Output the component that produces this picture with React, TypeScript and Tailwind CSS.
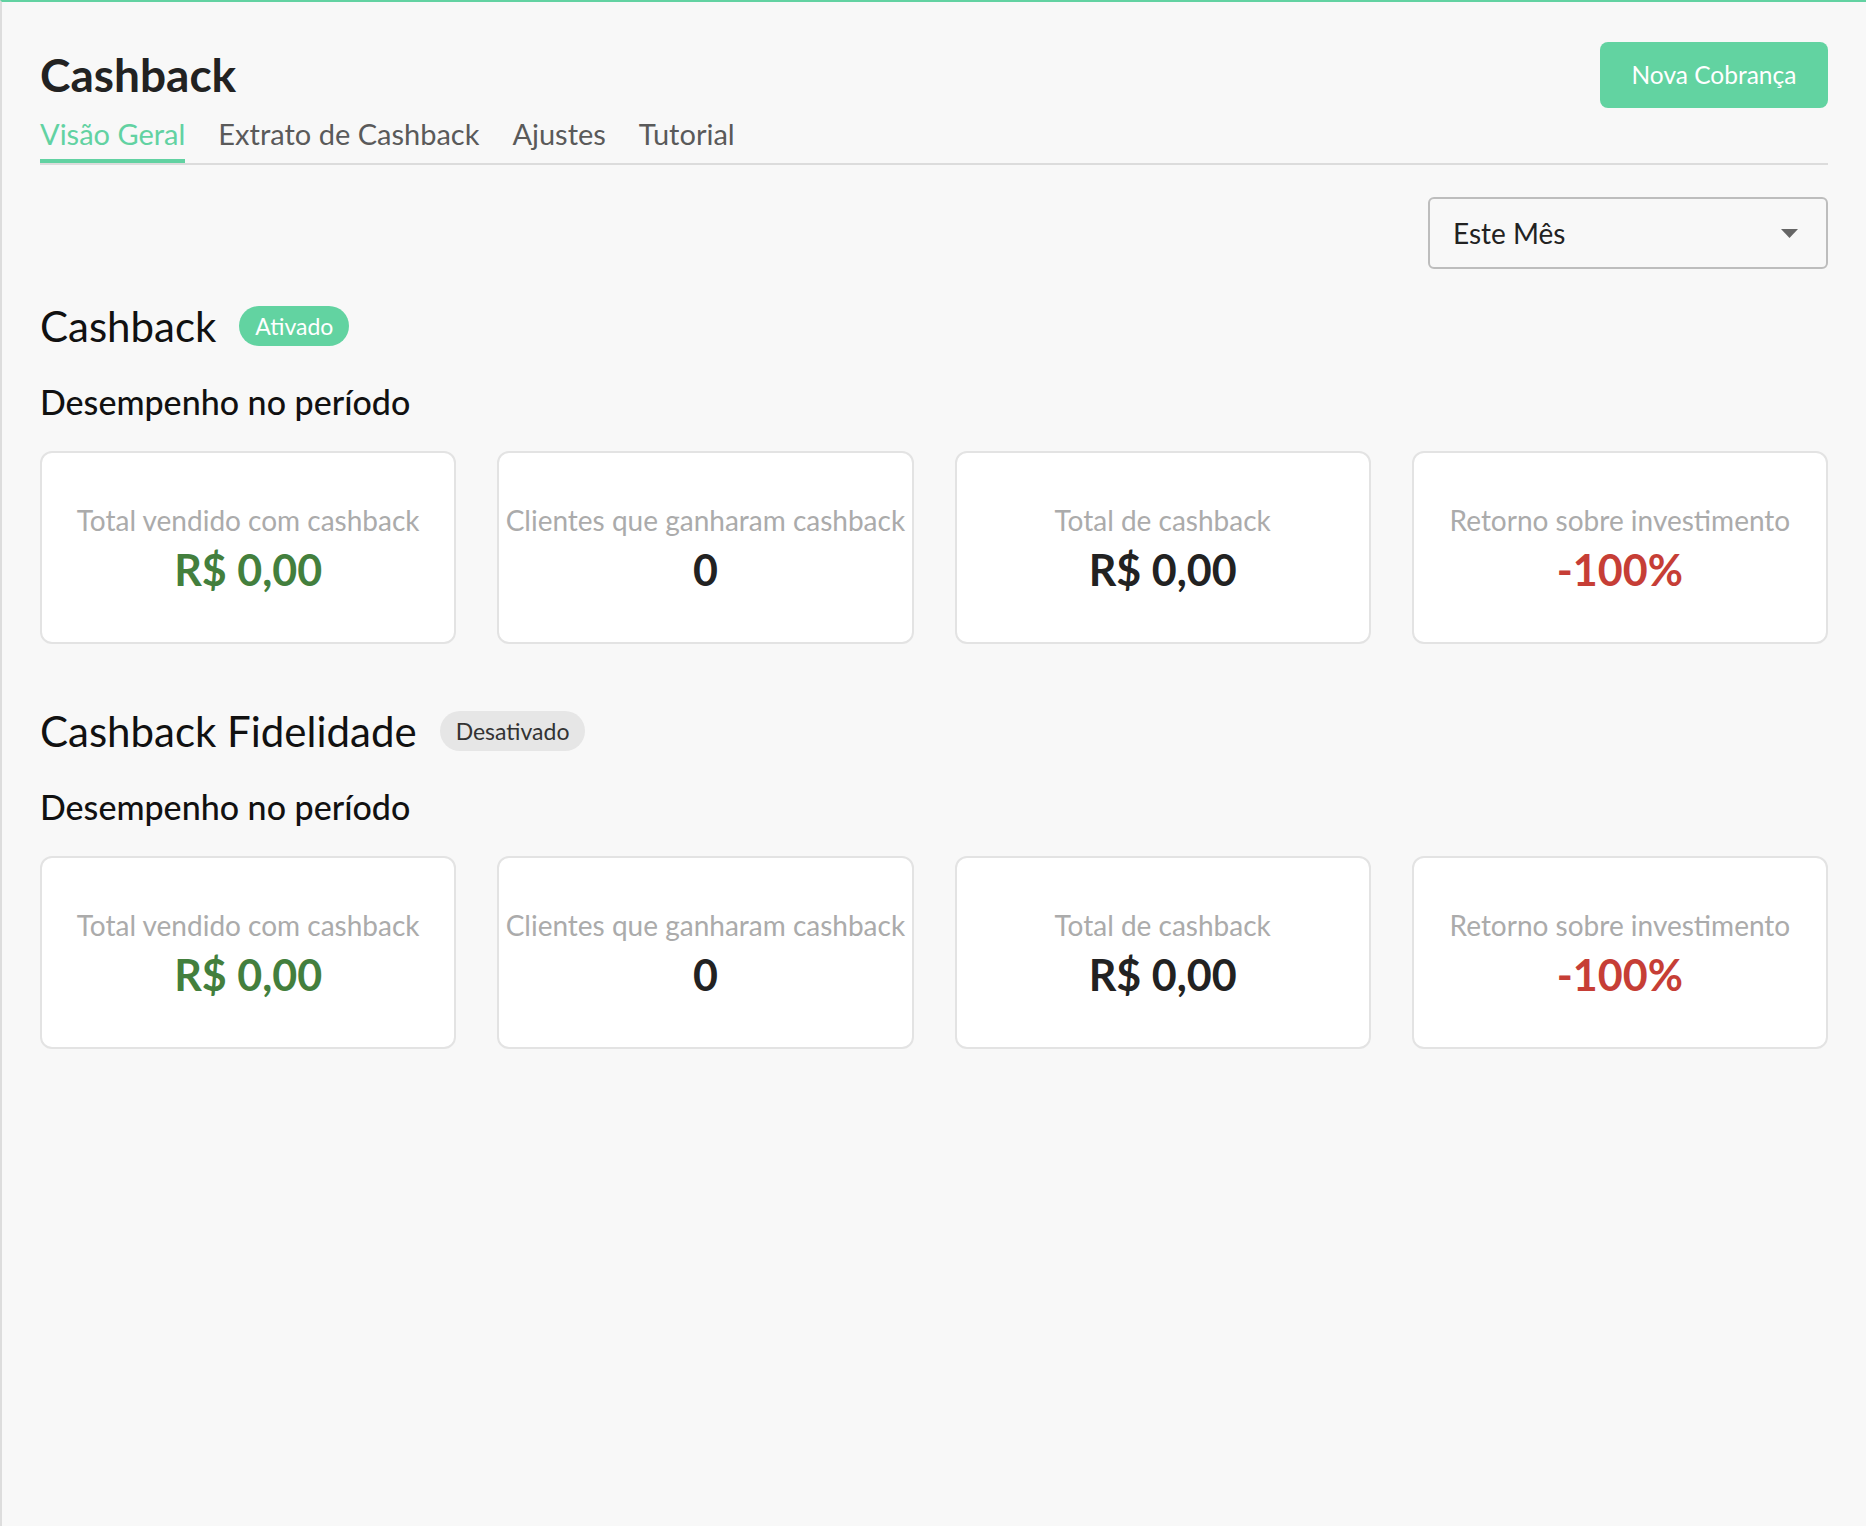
import { useState } from "react";

type Stat = { label: string; value: string; tone: "green" | "dark" | "red" };

const stats: Stat[] = [
  { label: "Total vendido com cashback", value: "R$ 0,00", tone: "green" },
  { label: "Clientes que ganharam cashback", value: "0", tone: "dark" },
  { label: "Total de cashback", value: "R$ 0,00", tone: "dark" },
  { label: "Retorno sobre investimento", value: "-100%", tone: "red" },
];

const toneClass = {
  green: "text-[#437f3d]",
  dark: "text-[#222222]",
  red: "text-[#c63e36]",
};

function StatCard({ stat }: { stat: Stat }) {
  return (
    <div className="h-[193px] rounded-xl border-2 border-[#e3e3e3] bg-white flex flex-col items-center justify-center gap-[8px]">
      <div className="text-[28px] leading-[36px] text-[#ababab] whitespace-nowrap">{stat.label}</div>
      <div className={`text-[43px] leading-[48px] font-bold ${toneClass[stat.tone]}`}>{stat.value}</div>
    </div>
  );
}

function Section({ title, active }: { title: string; active: boolean }) {
  return (
    <section>
      <div className="flex items-center gap-[23px] h-[48px]">
        <h2 className="text-[42px] leading-[48px] text-[#111111]">{title}</h2>
        {active ? (
          <span className="h-[40px] px-[16px] rounded-full bg-[#62d3a1] text-white text-[23px] leading-[40px]">
            Ativado
          </span>
        ) : (
          <span className="h-[40px] px-[16px] rounded-full bg-[#e6e6e6] text-[#333333] text-[23px] leading-[40px]">
            Desativado
          </span>
        )}
      </div>
      <h3 className="mt-[32px] text-[34px] leading-[40px] font-medium text-[#111111]">Desempenho no período</h3>
      <div className="mt-[29px] grid grid-cols-4 gap-[41px]">
        {stats.map((s) => (
          <StatCard key={s.label} stat={s} />
        ))}
      </div>
    </section>
  );
}

export default function App() {
  const [tab, setTab] = useState(0);
  const tabs = ["Visão Geral", "Extrato de Cashback", "Ajustes", "Tutorial"];

  return (
    <div
      className="min-h-[1526px] bg-[#f8f8f8] border-t-2 border-t-[#62d2a2] border-l-2 border-l-[#dddddd] pl-[38px] pr-[38px]"
      style={{ fontFamily: "Lato, 'Noto Sans', sans-serif" }}
    >
      {/* Header */}
      <div className="flex items-center justify-between pt-[40px]">
        <h1 className="text-[46px] leading-[66px] font-bold text-[#222222]">Cashback</h1>
        <button className="w-[228px] h-[66px] rounded-lg bg-[#62d3a1] text-white text-[24.5px]">
          Nova Cobrança
        </button>
      </div>

      {/* Tabs */}
      <div className="flex gap-[33px] border-b-2 border-[#dcdcdc] mt-[8px]">
        {tabs.map((t, i) => (
          <button
            key={t}
            onClick={() => setTab(i)}
            className={
              i === tab
                ? "text-[29px] leading-[36px] pb-[7px] border-b-4 border-[#62d2a2] text-[#62d2a2]"
                : "text-[29px] leading-[36px] pb-[7px] border-b-4 border-transparent text-[#5a5a5a]"
            }
          >
            {t}
          </button>
        ))}
      </div>

      {/* Period select */}
      <div className="flex justify-end mt-[32px]">
        <div className="w-[400px] h-[72px] rounded-md border-2 border-[#bdbdbd] flex items-center justify-between pl-[23px] pr-[28px]">
          <span className="text-[28px] text-[#222222]">Este Mês</span>
          <svg width="17" height="9" viewBox="0 0 17 9">
            <path d="M0 0h17L8.5 9z" fill="#666666" />
          </svg>
        </div>
      </div>

      <div className="mt-[33px]">
        <Section title="Cashback" active />
      </div>
      <div className="mt-[63px]">
        <Section title="Cashback Fidelidade" active={false} />
      </div>
    </div>
  );
}
